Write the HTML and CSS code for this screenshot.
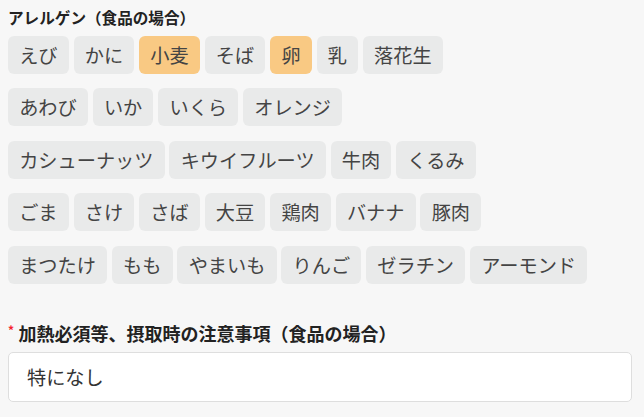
FILE: index.html
```html
<!DOCTYPE html>
<html lang="ja">
<head>
<meta charset="utf-8">
<link rel="stylesheet" href="styles.css">
</head>
<body>
<div class="page">
  <div class="field-label">アレルゲン（食品の場合）</div>
  <div class="tag-rows">
    <div class="tag-row">
      <span class="tag">えび</span><span class="tag">かに</span><span class="tag on">小麦</span><span class="tag">そば</span><span class="tag on">卵</span><span class="tag">乳</span><span class="tag">落花生</span>
    </div>
    <div class="tag-row">
      <span class="tag">あわび</span><span class="tag">いか</span><span class="tag">いくら</span><span class="tag">オレンジ</span>
    </div>
    <div class="tag-row">
      <span class="tag">カシューナッツ</span><span class="tag">キウイフルーツ</span><span class="tag">牛肉</span><span class="tag">くるみ</span>
    </div>
    <div class="tag-row">
      <span class="tag">ごま</span><span class="tag">さけ</span><span class="tag">さば</span><span class="tag">大豆</span><span class="tag">鶏肉</span><span class="tag">バナナ</span><span class="tag">豚肉</span>
    </div>
    <div class="tag-row">
      <span class="tag">まつたけ</span><span class="tag">もも</span><span class="tag">やまいも</span><span class="tag">りんご</span><span class="tag">ゼラチン</span><span class="tag">アーモンド</span>
    </div>
  </div>
  <div class="field-label big"><span class="req">*</span>加熱必須等、摂取時の注意事項（食品の場合）</div>
  <div class="input-box">特になし</div>
</div>
</body>
</html>
```
FILE: styles.css
```css
html, body {
  margin: 0;
  padding: 0;
  background: #f7f7f7;
}
.page {
  padding: 6px 12px 0 8px;
  font-family: "Noto Sans CJK JP", "Noto Sans", sans-serif;
  color: #333;
}
.field-label {
  font-size: 15.6px;
  font-weight: 700;
  line-height: 22px;
  color: #222;
  margin-bottom: 8px;
}
.field-label.big {
  font-size: 18px;
  line-height: 24px;
  margin-top: 37px;
  margin-bottom: 7px;
  display: flex;
  align-items: flex-start;
}
.req {
  color: #f5222d;
  font-size: 12px;
  line-height: 18px;
  width: 10.5px;
  flex: none;
}
.tag-rows {
  display: flex;
  flex-direction: column;
  gap: 14.4px;
}
.tag-row {
  display: flex;
  gap: 4.8px;
}
.tag {
  display: flex;
  align-items: center;
  height: 38px;
  padding: 0 11.2px;
  font-size: 19.2px;
  color: #444;
  background: #e9eaea;
  border-radius: 6px;
  white-space: nowrap;
}
.tag.on {
  background: #f9c983;
}
.input-box {
  height: 48px;
  display: flex;
  align-items: center;
  padding-left: 18px;
  background: #fff;
  border: 1px solid #dedede;
  border-radius: 5px;
  font-size: 19.2px;
  color: #333;
}
```
